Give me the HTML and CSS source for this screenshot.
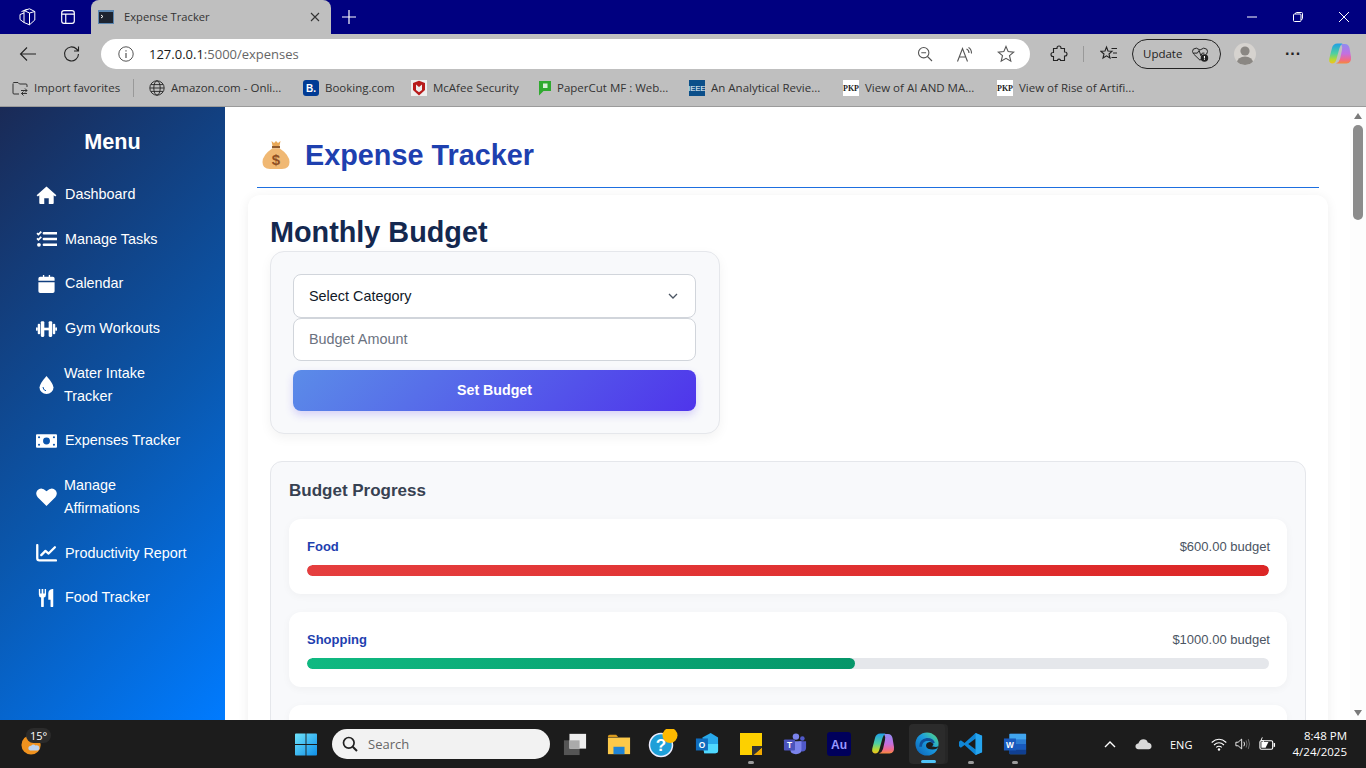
FILE: index.html
```html
<!DOCTYPE html>
<html lang="en">
<head>
<meta charset="utf-8">
<title>Expense Tracker</title>
<link rel="stylesheet" href="styles.css">
</head>
<body>
<div class="tabstrip">
  <div class="strip-left">
    <svg class="ic20 spaces" viewBox="0 0 20 20"><path d="M7 3.5 12.5 1.8 17.8 4.5V13L12.5 17.8 7 15.5Z M7 3.5 12.5 6V17.8 M12.5 6 17.8 4.5 M7 6 3 7.5V12.5L7 15.5 M4.5 4.5 10 2.5" class="w"/></svg>
    <svg class="ic20 gap-tab" viewBox="0 0 20 20"><rect x="3" y="3" width="14" height="14" rx="2.5" class="w bold"/><path d="M3 6.8H17 M7.5 6.8V17" class="w bold"/></svg>
  </div>
  <div class="tab">
    <svg class="fav" viewBox="0 0 16 16"><rect width="16" height="14" y="1" fill="#5b86b0"/><rect x="1" y="3" width="14" height="11" fill="#1d2430"/><path d="M3 6 5 7.5 3 9" stroke="#fff" fill="none"/></svg>
    <span class="tab-title">Expense Tracker</span>
    <svg class="tab-x" viewBox="0 0 10 10"><path d="M1 1 9 9M9 1 1 9" stroke="#333" stroke-width="1.1"/></svg>
  </div>
  <svg class="plus" viewBox="0 0 16 16"><path d="M8 1V15M1 8H15" stroke="#fff" stroke-width="1.2"/></svg>
  <div class="win-controls">
    <svg viewBox="0 0 12 12"><path d="M1 6H11" stroke="#fff"/></svg>
    <svg viewBox="0 0 12 12"><rect x="1.5" y="3" width="7.5" height="7.5" rx="1" class="w"/><path d="M3.5 3V2.5Q3.5 1.5 4.5 1.5H9.5Q10.5 1.5 10.5 2.5V7.5Q10.5 8.5 9.5 8.5H9" class="w"/></svg>
    <svg viewBox="0 0 12 12"><path d="M1 1 11 11M11 1 1 11" stroke="#fff"/></svg>
  </div>
</div>

<div class="toolbar">
  <svg class="nav-ic first" viewBox="0 0 18 18"><path d="M17 9H1.5M8 2.5 1.5 9 8 15.5" class="d"/></svg>
  <svg class="nav-ic reload" viewBox="0 0 18 18"><path d="M15.5 9A7 7 0 1 1 13.5 4L15.5 6M15.5 1.5V6H11" class="d"/></svg>
  <div class="address">
    <svg class="info" viewBox="0 0 16 16"><circle cx="8" cy="8" r="7.2" fill="none" stroke="#555"/><path d="M8 7V12M8 4.2V5.6" stroke="#555" stroke-width="1.2"/></svg>
    <span class="url"><span class="host">127.0.0.1</span>:5000/expenses</span>
    <svg class="addr-ic" viewBox="0 0 16 16"><circle cx="6.7" cy="6.7" r="5.2" class="g"/><path d="M4.3 6.7H9.1M10.5 10.5 15 15" class="g"/></svg>
    <svg class="addr-ic read" viewBox="0 0 18 16"><path d="M1.5 15 6.5 2 11.5 15M3.3 10.5H9.7" class="g"/><path d="M10.5 2.5Q13 3.5 13 6.5M12.5 1Q15.5 2.5 15.5 7" class="g"/></svg>
    <svg class="addr-ic last" viewBox="0 0 18 18"><path d="M9 1.5 11.2 6.6 16.7 7.1 12.5 10.7 13.8 16.2 9 13.3 4.2 16.2 5.5 10.7 1.3 7.1 6.8 6.6Z" class="g"/></svg>
  </div>
  <svg class="tool-ic ext" viewBox="0 0 18 18"><path d="M7 3.5V3A2 2 0 0 1 11 3V3.5H14.5V7H15A2 2 0 0 1 15 11H14.5V15.5H10.5V15A1.7 1.7 0 0 0 7.5 15V15.5H3.5V11.5H3A2 2 0 0 1 3 7.5H3.5V3.5Z" class="d"/></svg>
  <span class="tool-sep"></span>
  <svg class="tool-ic favs" viewBox="0 0 18 18"><path d="M6.5 2 8 6 12 6.3 9 9 10 13 6.5 10.8 3 13 4 9 1 6.3 5 6Z" class="d"/><path d="M11.5 3.5H17M13 8H17M11.5 12.5H17" class="d"/></svg>
  <div class="update"><span>Update</span>
    <svg class="heart" viewBox="0 0 20 18"><path d="M10 16 2.8 9Q.5 6 2.5 3.5 5.5.8 10 4.5 14.5.8 17.5 3.5 19.5 6 17.5 9Z" class="d"/><path d="M3 8H7L9 5 11 11 12.5 8H15" class="d"/><circle cx="15" cy="13.5" r="4.2" fill="#222"/><path d="M15 11.3V14M15 15V15.8" stroke="#fff" stroke-width="1.2"/></svg>
  </div>
  <div class="avatar"><svg viewBox="0 0 22 22"><circle cx="11" cy="8" r="4.6" fill="#8a8783"/><path d="M2.5 20Q4 13.5 11 13.5T19.5 20Q15 22 11 22T2.5 20Z" fill="#8a8783"/></svg></div>
  <span class="dots">···</span>
  <svg class="copilot top" viewBox="0 0 24 24"><use href="#copilot-shape"/></svg>
</div>

<div class="bookmarks">
  <div class="bm"><svg class="fav" viewBox="0 0 16 16"><path d="M1 3.5Q1 2.5 2 2.5H6L7.5 4H14Q15 4 15 5V7M7 14H2Q1 14 1 13V4M9 10.5H15M13 8.5 15 10.5 13 12.5M15 13.5H9.5M11.5 11.5 9.5 13.5 11.5 15.5" class="d thin"/></svg><span>Import favorites</span></div>
  <span class="bm-sep"></span>
  <div class="bm"><svg class="fav" viewBox="0 0 16 16"><circle cx="8" cy="8" r="7.2" class="d thin"/><ellipse cx="8" cy="8" rx="3.2" ry="7.2" class="d thin"/><path d="M1 8H15M2 4.6H14M2 11.4H14" class="d thin"/></svg><span>Amazon.com - Onli...</span></div>
  <div class="bm"><span class="tile booking">B.</span><span>Booking.com</span></div>
  <div class="bm"><svg class="fav" viewBox="0 0 16 16"><rect width="16" height="16" fill="#eee"/><path d="M2 3 8 .8 14 3V10L8 15.5 2 10Z" fill="#b81b1b"/><path d="M5 4.5V10L8 12.2 11 10V4.5L8 7Z" fill="#eee"/></svg><span>McAfee Security</span></div>
  <div class="bm papercut"><svg class="fav" viewBox="0 0 16 16"><path d="M2 1H14V11H6.5L2 15.5Z" fill="#2faa2f"/><rect x="6" y="3.5" width="4.5" height="4.5" fill="#d8f0d8"/></svg><span>PaperCut MF : Web...</span></div>
  <div class="bm"><span class="tile ieee">IEEE</span><span>An Analytical Revie...</span></div>
  <div class="bm"><span class="tile pkp">PKP</span><span>View of AI AND MA...</span></div>
  <div class="bm"><span class="tile pkp">PKP</span><span>View of Rise of Artifi...</span></div>
</div>

<div class="viewport">
  <aside class="sidebar">
    <h2 class="menu-title">Menu</h2>
    <nav class="menu">
      <a class="item"><svg class="mi" viewBox="0 0 22 20"><path d="M11 .5 22 10.2 20.6 11.6 19 10.2V19Q19 20 18 20H13.5V13.5H8.5V20H4Q3 20 3 19V10.2L1.4 11.6 0 10.2Z" fill="#fff"/></svg><span>Dashboard</span></a>
      <a class="item"><svg class="mi" viewBox="0 0 20 16"><path d="M1 2.5 2.3 3.8 5 1M1 7.5 2.3 8.8 5 6" fill="none" stroke="#fff" stroke-width="1.7"/><circle cx="2.8" cy="13.5" r="1.8" fill="#fff"/><path d="M7.5 2.5H19.5M7.5 8H19.5M7.5 13.5H19.5" stroke="#fff" stroke-width="2.4" stroke-linecap="round"/></svg><span>Manage Tasks</span></a>
      <a class="item"><svg class="mi cal" viewBox="0 0 18 20"><path d="M5 0H6.5V2H11.5V0H13V2H16Q18 2 18 4V6.5H0V4Q0 2 2 2H5ZM0 8H18V18Q18 20 16 20H2Q0 20 0 18Z" fill="#fff"/></svg><span>Calendar</span></a>
      <a class="item"><svg class="mi" viewBox="0 0 24 18"><g fill="#fff"><rect x="5.5" y="0" width="4" height="18" rx="1.3"/><rect x="14.5" y="0" width="4" height="18" rx="1.3"/><rect x="2" y="3" width="2.8" height="12" rx="1.2"/><rect x="19.2" y="3" width="2.8" height="12" rx="1.2"/><rect x="0" y="7" width="2" height="4" rx="1"/><rect x="22" y="7" width="2" height="4" rx="1"/><rect x="9" y="7.5" width="6" height="3"/></g></svg><span>Gym Workouts</span></a>
      <a class="item wrap"><svg class="mi drop" viewBox="0 0 14 18"><path d="M7 0Q14 8 14 11.5A7 6.5 0 0 1 0 11.5Q0 8 7 0Z" fill="#fff"/><path d="M3.5 11Q3.5 14 6.5 14.8" fill="none" stroke="#0b55ad" stroke-width="1"/></svg><span>Water Intake Tracker</span></a>
      <a class="item"><svg class="mi" viewBox="0 0 22 14"><path d="M1 0H21Q22 0 22 1V13Q22 14 21 14H1Q0 14 0 13V1Q0 0 1 0Z" fill="#fff"/><circle cx="11" cy="7" r="3.6" fill="#0b55ad"/><circle cx="3.2" cy="3" r="1.1" fill="#0b55ad"/><circle cx="18.8" cy="3" r="1.1" fill="#0b55ad"/><circle cx="3.2" cy="11" r="1.1" fill="#0b55ad"/><circle cx="18.8" cy="11" r="1.1" fill="#0b55ad"/></svg><span>Expenses Tracker</span></a>
      <a class="item wrap"><svg class="mi heart-i" viewBox="0 0 20 17"><path d="M10 17 1.6 8.7Q-1 5.5 1.2 2.3 5-1.8 10 3 15-1.8 18.8 2.3 21 5.5 18.4 8.7Z" fill="#fff"/></svg><span>Manage Affirmations</span></a>
      <a class="item"><svg class="mi" viewBox="0 0 20 17"><path d="M1.2 1V13.5Q1.2 15.5 3.2 15.5H19" fill="none" stroke="#fff" stroke-width="2.2" stroke-linecap="round"/><path d="M5 10.5 9 6.5 12 9 18 3" fill="none" stroke="#fff" stroke-width="2.2" stroke-linecap="round" stroke-linejoin="round"/></svg><span>Productivity Report</span></a>
      <a class="item"><svg class="mi" viewBox="0 0 18 20"><path d="M.5 0V6Q.5 9 3 9.5V19A1.5 1.5 0 0 0 6 19V9.5Q8.5 9 8.5 6V0H7V5H5.4V0H3.6V5H2V0Z" fill="#fff"/><path d="M11 12V5Q11 1 15.5 0H16.5V19A1.5 1.5 0 0 1 13.5 19V12Z" fill="#fff"/></svg><span>Food Tracker</span></a>
    </nav>
  </aside>

  <main class="content">
    <header class="page-head">
      <svg class="bag" viewBox="0 0 28 30"><path d="M9.5 1 12 3 14 1 16 3 18.5 1 17.5 6H10.5Z" fill="#e9a857"/><rect x="10" y="6" width="8" height="2.2" fill="#8f5a2e"/><path d="M10.5 8.2H17.5Q27.5 15 27.5 22 27.5 29 20 29H8Q.5 29 .5 22 .5 15 10.5 8.2Z" fill="#f0b873"/><text x="14" y="24.5" class="bag-sign">$</text></svg>
      <h1 class="page-title">Expense Tracker</h1>
    </header>
    <section class="card">
      <h2 class="section-title">Monthly Budget</h2>
      <form class="budget-form">
        <div class="select-wrap">
          <select class="field select"><option>Select Category</option></select>
          <svg class="chev" viewBox="0 0 10 6"><path d="M1 1 5 5 9 1" fill="none" stroke="#4b5563" stroke-width="1.3"/></svg>
        </div>
        <input class="field" type="text" placeholder="Budget Amount">
        <button class="set-btn" type="button">Set Budget</button>
      </form>
      <section class="progress">
        <h3 class="progress-title">Budget Progress</h3>
        <div class="budget-item">
          <div class="row"><span class="cat">Food</span><span class="amt">$600.00 budget</span></div>
          <div class="bar"><div class="fill red" style="width:100%"></div></div>
        </div>
        <div class="budget-item">
          <div class="row"><span class="cat">Shopping</span><span class="amt">$1000.00 budget</span></div>
          <div class="bar"><div class="fill green" style="width:57%"></div></div>
        </div>
        <div class="budget-item">
          <div class="row"><span class="cat">&nbsp;</span></div>
        </div>
      </section>
    </section>
  </main>

  <div class="scrollbar">
    <svg class="arrow" viewBox="0 0 10 8"><path d="M5 1 9 7H1Z" fill="#7a7a7a"/></svg>
    <div class="thumb"></div>
    <svg class="arrow" viewBox="0 0 10 8"><path d="M5 7 9 1H1Z" fill="#7a7a7a"/></svg>
  </div>
</div>

<footer class="taskbar">
  <div class="weather">
    <svg class="sun" viewBox="0 0 24 24"><circle cx="11" cy="13" r="10.5" fill="#f0921e"/><path d="M8 17Q8 14 11 14 13 11.5 16 13.5 20 13 20 16.5 20 19 17 19H10Q8 19 8 17Z" fill="#bcd3f0"/></svg>
    <span class="temp">15°</span>
  </div>
  <svg class="start" viewBox="0 0 24 24"><defs><linearGradient id="st" x1="0" y1="0" x2="1" y2="1"><stop offset="0" stop-color="#6fe3fb"/><stop offset="1" stop-color="#0f8fe8"/></linearGradient></defs><path d="M0 1Q0 0 1 0H11.5V11.5H0ZM12.5 0H23Q24 0 24 1V11.5H12.5ZM0 12.5H11.5V24H1Q0 24 0 23ZM12.5 12.5H24V23Q24 24 23 24H12.5Z" fill="url(#st)"/></svg>
  <div class="search">
    <svg class="search-ic" viewBox="0 0 16 16"><circle cx="6.8" cy="6.8" r="5.3" fill="none" stroke="#222" stroke-width="1.7"/><path d="M10.7 10.7 15 15" stroke="#222" stroke-width="2"/></svg>
    <span>Search</span>
  </div>
  <div class="apps">
    <div class="app"><svg viewBox="0 0 26 26"><rect x="1" y="9" width="17" height="16" fill="#555"/><rect x="7" y="2" width="18" height="16" fill="#eee"/><rect x="7" y="9" width="11" height="9" fill="#aaa"/></svg></div>
    <div class="app"><svg viewBox="0 0 26 26"><path d="M1 5Q1 3 3 3H10L12 5.5H1Z" fill="#d99a1d"/><path d="M1 6H25V24H1Z" fill="#fcc94a"/><path d="M7 16H19V24H7Z" fill="#1f84d6"/></svg></div>
    <div class="app help-app"><svg viewBox="0 0 30 30"><circle cx="13" cy="16" r="11.5" fill="#1e9fd8" stroke="#eef" stroke-width="1.5"/><text x="13" y="22" class="help">?</text><circle cx="22" cy="6.5" r="7.5" fill="#fdb900"/></svg></div>
    <div class="app"><svg viewBox="0 0 26 26"><path d="M8 6 17 1 25 6V20Q25 23 22 23H10Z" fill="#28a8ea"/><path d="M8 13H25V20Q25 23 22 23H10Z" fill="#50d9ff"/><rect x="1" y="7" width="13" height="13" fill="#0f6cbd"/><text x="7.5" y="17.5" class="app-letter">O</text></svg></div>
    <div class="app running"><svg viewBox="0 0 24 24"><rect x="1" y="1" width="22" height="22" fill="#fdd000"/><path d="M13 23V14H23V16L15 23Z" fill="#333"/><path d="M15 23 23 16V23Z" fill="#f0a800"/></svg></div>
    <div class="app"><svg viewBox="0 0 26 26"><circle cx="14" cy="5" r="3.5" fill="#7b83eb"/><circle cx="21" cy="7" r="2.5" fill="#5059c9"/><path d="M17 10H25V17Q25 21 21 21H17Z" fill="#5059c9"/><path d="M8 10H20V19Q20 24 14 24T8 19Z" fill="#7b83eb"/><rect x="1" y="8" width="12" height="12" rx="1" fill="#4b53bc"/><text x="7" y="17.5" class="app-letter">T</text></svg></div>
    <div class="app"><svg viewBox="0 0 22 22"><rect width="22" height="22" rx="3" fill="#00005b"/><text x="11" y="16" class="au">Au</text></svg></div>
    <div class="app"><svg class="copilot-task" viewBox="0 0 24 24"><use href="#copilot-shape"/></svg></div>
    <div class="app active">
      <svg viewBox="0 0 26 26"><defs><linearGradient id="eg" x1="0" y1="1" x2="1" y2="0"><stop offset="0" stop-color="#0b5fb3"/><stop offset=".55" stop-color="#1a9ae0"/><stop offset="1" stop-color="#5be07a"/></linearGradient></defs><circle cx="13" cy="13" r="12.5" fill="url(#eg)"/><path d="M25.5 15Q25 19 19 19 13 19 12 15.5 11.5 12 15 11 19 10.5 20 13 20 15 18 15.5 25 17 25.5 15Z" fill="#1c1c1c"/><path d="M6 16Q6 9 13 8 19 8 20 12" fill="none" stroke="#0f4f9a" stroke-width="3"/></svg>
    </div>
    <div class="app running"><svg viewBox="0 0 26 26"><path d="M18 1 25 4V22L18 25 6 14 2 17 0 15.5V10.5L2 9 6 12Z" fill="#0f86d6"/><path d="M18 7 10 13 18 19Z" fill="#1c1c1c"/><path d="M18 1 25 4V22L18 25Z" fill="#26a5ef"/></svg></div>
    <div class="app running"><svg viewBox="0 0 26 26"><rect x="7" y="2" width="18" height="22" rx="1" fill="#2b7cd3"/><rect x="7" y="13" width="18" height="6" fill="#185abd"/><rect x="7" y="19" width="18" height="5" fill="#103f91"/><rect x="7" y="2" width="18" height="6" fill="#41a5ee"/><rect x="1" y="7" width="13" height="13" fill="#185abd"/><text x="7.5" y="17.5" class="app-letter">W</text></svg></div>
  </div>
  <div class="tray">
    <svg class="chevron" viewBox="0 0 12 8"><path d="M1 7 6 2 11 7" fill="none" stroke="#fff" stroke-width="1.4"/></svg>
    <svg class="cloud" viewBox="0 0 18 12"><path d="M3.5 11.5Q.5 11.5.5 8.5 .5 6 3.5 5.5 5 1 9 1 12.5 1 13.5 4.5 17.5 5 17.5 8.5 17.5 11.5 14.5 11.5Z" fill="#d9d9d9"/></svg>
    <span class="lang">ENG</span>
    <svg class="wifi" viewBox="0 0 16 13"><path d="M.7 4.5Q8-2 15.3 4.5M3 7Q8 2.5 13 7M5.2 9.4Q8 7 10.8 9.4" fill="none" stroke="#fff" stroke-width="1.1"/><circle cx="8" cy="11.5" r="1.2" fill="#fff"/></svg>
    <svg class="vol" viewBox="0 0 18 14"><path d="M1 5H3.5L7.5 1.5V12.5L3.5 9H1Z" fill="none" stroke="#fff"/><path d="M10 4.5Q11.5 7 10 9.5" fill="none" stroke="#fff"/><path d="M12.5 3Q14.5 7 12.5 11M15 1.5Q17.5 7 15 12.5" fill="none" stroke="#777"/></svg>
    <svg class="batt" viewBox="0 0 18 14"><rect x="1" y="3.5" width="13.5" height="9" rx="1.5" fill="none" stroke="#fff" stroke-width="1.2"/><path d="M15.5 6H17V10H15.5Z" fill="#fff"/><path d="M2.5 5H10L7 11H2.5Z" fill="#fff"/><path d="M3.5 0 2 3.5H5L3.5 7" fill="none" stroke="#fff"/></svg>
    <div class="clock"><span>8:48 PM</span><span>4/24/2025</span></div>
  </div>
</footer>

<svg class="defs" aria-hidden="true"><defs>
  <linearGradient id="cp1" x1="0" y1="0" x2="0" y2="1"><stop offset="0" stop-color="#1f9fe6"/><stop offset=".5" stop-color="#4fd0a0"/><stop offset=".8" stop-color="#b8d832"/><stop offset="1" stop-color="#f4c21c"/></linearGradient>
  <linearGradient id="cp2" x1="0" y1="0" x2="0" y2="1"><stop offset="0" stop-color="#8f8cf0"/><stop offset=".5" stop-color="#c46fe0"/><stop offset=".8" stop-color="#f06a8a"/><stop offset="1" stop-color="#f58a3c"/></linearGradient>
  <symbol id="copilot-shape" viewBox="0 0 24 24">
    <path d="M13 2H17Q20.5 2 21.5 6L23 15Q23.5 21 18.5 21.5H8Q11 20.5 12 17L14 8Q14.5 4 13 2Z" fill="url(#cp2)"/>
    <path d="M9.5 1.5H14.5Q12.5 2.5 11.5 6L8.5 17Q7.5 21.5 4 21.5 .5 21 1.3 16.5L4 6Q5 1.5 9.5 1.5Z" fill="url(#cp1)"/>
  </symbol>
</defs></svg>
</body>
</html>
```

FILE: styles.css
```css
* { box-sizing: border-box; }
html, body { margin: 0; padding: 0; }
body {
  width: 1366px;
  height: 768px;
  overflow: hidden;
  display: flex;
  flex-direction: column;
  background: #fff;
  font-family: "Liberation Sans", Arial, sans-serif;
}
svg { display: block; flex: none; }
.w { fill: none; stroke: #fff; stroke-width: 1; }
.w.bold { stroke-width: 1.3; }
.d { fill: none; stroke: #222; stroke-width: 1.1; }
.d.thin { stroke-width: .9; }
.g { fill: none; stroke: #555; stroke-width: 1.1; }
.defs { width: 0; height: 0; position: absolute; }

/* Tab strip */
.tabstrip {
  height: 34px;
  flex: none;
  background: #000080;
  display: flex;
  align-items: center;
}
.strip-left { width: 91px; display: flex; align-items: center; padding-left: 17px; }
.ic20 { width: 18px; height: 18px; }
.ic20.spaces { width: 20px; height: 20px; }
.gap-tab { margin-left: 22px; }
.tab {
  width: 240px;
  height: 34px;
  background: #bfbfbf;
  border-radius: 8px 8px 0 0;
  display: flex;
  align-items: center;
  padding: 0 11px 0 7px;
}
.fav { width: 16px; height: 16px; }
.tab-title {
  flex: 1;
  margin-left: 10px;
  padding-bottom: 2px;
  font: 11.2px "Open Sans", sans-serif;
  color: #333;
}
.tab-x { width: 10px; height: 10px; }
.plus { width: 16px; height: 16px; margin-left: 10px; }
.win-controls {
  margin-left: auto;
  display: flex;
  gap: 34px;
  padding-right: 16px;
}
.win-controls svg { width: 12px; height: 12px; }

/* Toolbar */
.toolbar {
  height: 36px;
  flex: none;
  background: #bfbfbf;
  display: flex;
  align-items: center;
  padding-top: 4px;
}
.nav-ic { width: 18px; height: 18px; }
.nav-ic.first { margin-left: 19px; }
.nav-ic.reload { margin-left: 26px; }
.address {
  width: 929px;
  height: 30px;
  margin-left: 20px;
  background: #fff;
  border-radius: 15px;
  display: flex;
  align-items: center;
  padding-left: 17px;
}
.info { width: 16px; height: 16px; }
.url { flex: 1; margin-left: 15px; font: 13px "Open Sans", sans-serif; color: #666; }
.host { color: #1a1a1a; }
.addr-ic { width: 16px; height: 16px; margin-right: 23px; }
.addr-ic.read { width: 18px; height: 17px; margin-right: 23px; }
.addr-ic.last { width: 18px; height: 18px; margin-right: 15px; }
.tool-ic { width: 18px; height: 18px; }
.ext { margin-left: 20px; }
.tool-sep { width: 1px; height: 16px; background: #999; margin-left: 15px; }
.favs { margin-left: 16px; }
.update {
  width: 89px;
  height: 30px;
  margin-left: 14px;
  border: 1px solid #222;
  border-radius: 15px;
  display: flex;
  align-items: center;
  padding-left: 10px;
  gap: 9px;
  font: 11.5px "Open Sans", sans-serif;
  color: #222;
}
.update span { padding-bottom: 2px; }
.heart { width: 18px; height: 16px; }
.avatar {
  width: 22px;
  height: 22px;
  margin-left: 13px;
  border-radius: 50%;
  background: #d6d3cf;
  overflow: hidden;
}
.avatar svg { width: 22px; height: 22px; }
.dots { margin-left: 29px; font: bold 16px "Liberation Sans", sans-serif; color: #222; width: 16px; }
.copilot.top { width: 24px; height: 24px; margin-left: 27px; }

/* Bookmarks */
.bookmarks {
  height: 37px;
  flex: none;
  background: #bfbfbf;
  border-bottom: 1px solid #9b9b9b;
  display: grid;
  grid-template-columns: 121px 1px 169px 108px 126px 152px 154px 154px auto;
  padding-left: 12px;
  align-items: center;
  font: 11.5px "Open Sans", sans-serif;
  color: #333;
}
.bm { display: flex; align-items: center; gap: 6px; white-space: nowrap; }
.bm span:not(.tile) { padding-bottom: 2px; }
.bm.papercut { gap: 4px; }
.bm-sep { width: 1px; height: 18px; background: #999; }
.bm-sep + .bm { margin-left: 15px; }
.tile {
  width: 16px; height: 16px;
  display: flex; align-items: center; justify-content: center;
  flex: none;
}
.booking { background: #003b95; color: #fff; border-radius: 3px; font: bold 10px "Liberation Sans", sans-serif; }
.ieee { background: #0b4f8a; color: #fff; font: 7.5px "Liberation Sans", sans-serif; }
.pkp { background: #fff; color: #222; font: bold 8px "Liberation Serif", serif; }

/* Viewport */
.viewport { flex: 1; min-height: 0; display: flex; }
.sidebar {
  width: 225px;
  flex: none;
  background: linear-gradient(135deg, #1a2a56 0%, #0a57ad 55%, #007bff 100%);
  color: #fff;
  padding-top: 21px;
}
.menu-title {
  margin: 0 0 17.5px;
  font-size: 21.6px;
  line-height: 27px;
  font-weight: 700;
  text-align: center;
}
.menu { padding: 0 34px 0 36px; }
.item {
  display: flex;
  align-items: center;
  gap: 8px;
  padding: 10.7px 0;
  font-size: 14.4px;
  line-height: 23.2px;
  color: #fff;
}
.mi { width: 21px; height: 18px; }
.item.wrap { gap: 7px; }

/* Main */
.content { flex: 1; min-width: 0; padding: 0 22px 0 23px; overflow: hidden; }
.page-head {
  margin: 0 9px;
  padding: 30px 5px 14px;
  border-bottom: 1px solid #1d6fe0;
  display: flex;
  align-items: center;
  gap: 15px;
}
.bag { width: 28px; height: 30px; }
.bag-sign { font: bold 15px "Liberation Sans", sans-serif; fill: #8f4f24; text-anchor: middle; }
.page-title {
  margin: 0;
  font-size: 28.8px;
  line-height: 36px;
  font-weight: 700;
  color: #1e40af;
}
.card {
  margin-top: 7px;
  padding: 19px 22px 0;
  background: #fff;
  border-radius: 12px 12px 0 0;
  box-shadow: 0 2px 12px rgba(0, 0, 0, .07);
  min-height: 600px;
}
.section-title {
  margin: 0;
  font-size: 28.8px;
  line-height: 37px;
  font-weight: 700;
  color: #14284f;
}
.budget-form {
  width: 450px;
  padding: 22px 23px 22px 22px;
  background: #f8f9fb;
  border: 1px solid #e5e7eb;
  border-radius: 14px;
  box-shadow: 0 4px 12px rgba(0, 0, 0, .05);
  display: flex;
  flex-direction: column;
}
.select-wrap { position: relative; }
.field {
  display: block;
  width: 100%;
  height: 43px;
  padding: 0 15px 1px;
  background: #fff;
  border: 1px solid #d1d5db;
  border-radius: 8px;
  font: 14.4px "Liberation Sans", sans-serif;
  color: #111827;
  outline: none;
}
.field::placeholder { color: #6b7280; opacity: 1; }
.select { height: 44px; appearance: none; }
.chev { position: absolute; right: 18px; top: 19px; width: 10px; height: 6px; }
.set-btn {
  height: 41px;
  margin-top: 9px;
  padding-bottom: 2px;
  border: 0;
  border-radius: 8px;
  background: linear-gradient(135deg, #5b8ce8 0%, #4f35eb 100%);
  box-shadow: 0 4px 8px rgba(79, 53, 235, .2);
  color: #fff;
  font: bold 14.2px "Liberation Sans", sans-serif;
}
.progress {
  margin-top: 27px;
  padding: 18px;
  background: #f8f9fb;
  border: 1px solid #e5e7eb;
  border-radius: 12px;
}
.progress-title {
  margin: 0 0 17px;
  font-size: 17px;
  line-height: 22px;
  font-weight: 700;
  color: #374151;
}
.budget-item {
  margin-bottom: 18px;
  padding: 18px;
  background: #fff;
  border-radius: 12px;
  box-shadow: 0 2px 8px rgba(0, 0, 0, .04);
}
.row {
  height: 19px;
  margin-bottom: 9px;
  display: flex;
  align-items: center;
  justify-content: space-between;
}
.cat { font-size: 13px; font-weight: 700; color: #1e40af; }
.amt { font-size: 13px; color: #4b5563; margin-right: -1px; }
.bar { height: 11px; background: #e5e7eb; border-radius: 6px; overflow: hidden; }
.fill { height: 100%; border-radius: 6px; }
.red { background: linear-gradient(90deg, #e53e3e, #dc2626); }
.green { background: linear-gradient(90deg, #10b981, #059669); }

/* Scrollbar */
.scrollbar {
  width: 16px;
  flex: none;
  background: #fdfdfd;
  display: flex;
  flex-direction: column;
  align-items: center;
  padding: 5px 0 3px;
}
.arrow { width: 10px; height: 8px; }
.thumb { width: 10px; height: 95px; margin-top: 5px; margin-bottom: auto; background: #8c8c8c; border-radius: 5px; }

/* Taskbar */
.taskbar {
  height: 48px;
  flex: none;
  background: #1c1c1c;
  display: flex;
  align-items: center;
  color: #fff;
}
.weather { position: relative; width: 295px; padding-left: 21px; }
.sun { width: 22px; height: 22px; }
.temp {
  position: absolute;
  left: 26px;
  top: -5px;
  padding: 0 4px;
  background: #2b2b2b;
  border-radius: 8px;
  font: 11px "Open Sans", sans-serif;
}
.start { width: 22px; height: 23px; }
.search {
  width: 218px;
  height: 30px;
  margin-left: 15px;
  background: #f2f2f2;
  border-radius: 15px;
  display: flex;
  align-items: center;
  padding-left: 10px;
  gap: 10px;
  font: 13px "Open Sans", sans-serif;
  color: #666;
}
.search-ic { width: 16px; height: 16px; }
.apps { display: flex; margin-left: 3px; }
.app {
  width: 44px;
  height: 40px;
  display: flex;
  align-items: center;
  justify-content: center;
  position: relative;
}
.app svg { width: 24px; height: 24px; }
.app.help-app svg { width: 30px; height: 30px; }
.app.running::after {
  content: "";
  position: absolute;
  bottom: 0;
  left: 19px;
  width: 6px;
  height: 3px;
  border-radius: 2px;
  background: #9b9b9b;
}
.app.active { background: #2b2b2b; border-radius: 4px; box-shadow: 3px 0 0 #262626; width: 36px; margin: 0 4px; }
.app.active::after {
  content: "";
  position: absolute;
  bottom: 1px;
  left: 12px;
  width: 15px;
  height: 3px;
  border-radius: 2px;
  background: #4fc3f7;
}
.help { font: bold 17px "Liberation Sans", sans-serif; fill: #fff; text-anchor: middle; }
.app-letter { font: bold 9px "Liberation Sans", sans-serif; fill: #fff; text-anchor: middle; }
.au { font: bold 11px "Liberation Sans", sans-serif; fill: #9999ff; text-anchor: middle; }
.tray { display: flex; align-items: center; margin-left: 67px; flex: 1; }
.chevron { width: 12px; height: 8px; }
.cloud { width: 17px; height: 12px; margin-left: 19px; }
.lang { margin-left: 18px; width: 25px; font: 11px "Open Sans", sans-serif; }
.wifi { width: 16px; height: 13px; margin-left: 16px; }
.vol { width: 16px; height: 14px; margin-left: 8px; }
.batt { width: 17px; height: 14px; margin-left: 8px; }
.clock {
  margin-left: auto;
  padding-right: 19px;
  display: flex;
  flex-direction: column;
  align-items: flex-end;
  font: 11.5px/16px "Open Sans", sans-serif;
}
```
